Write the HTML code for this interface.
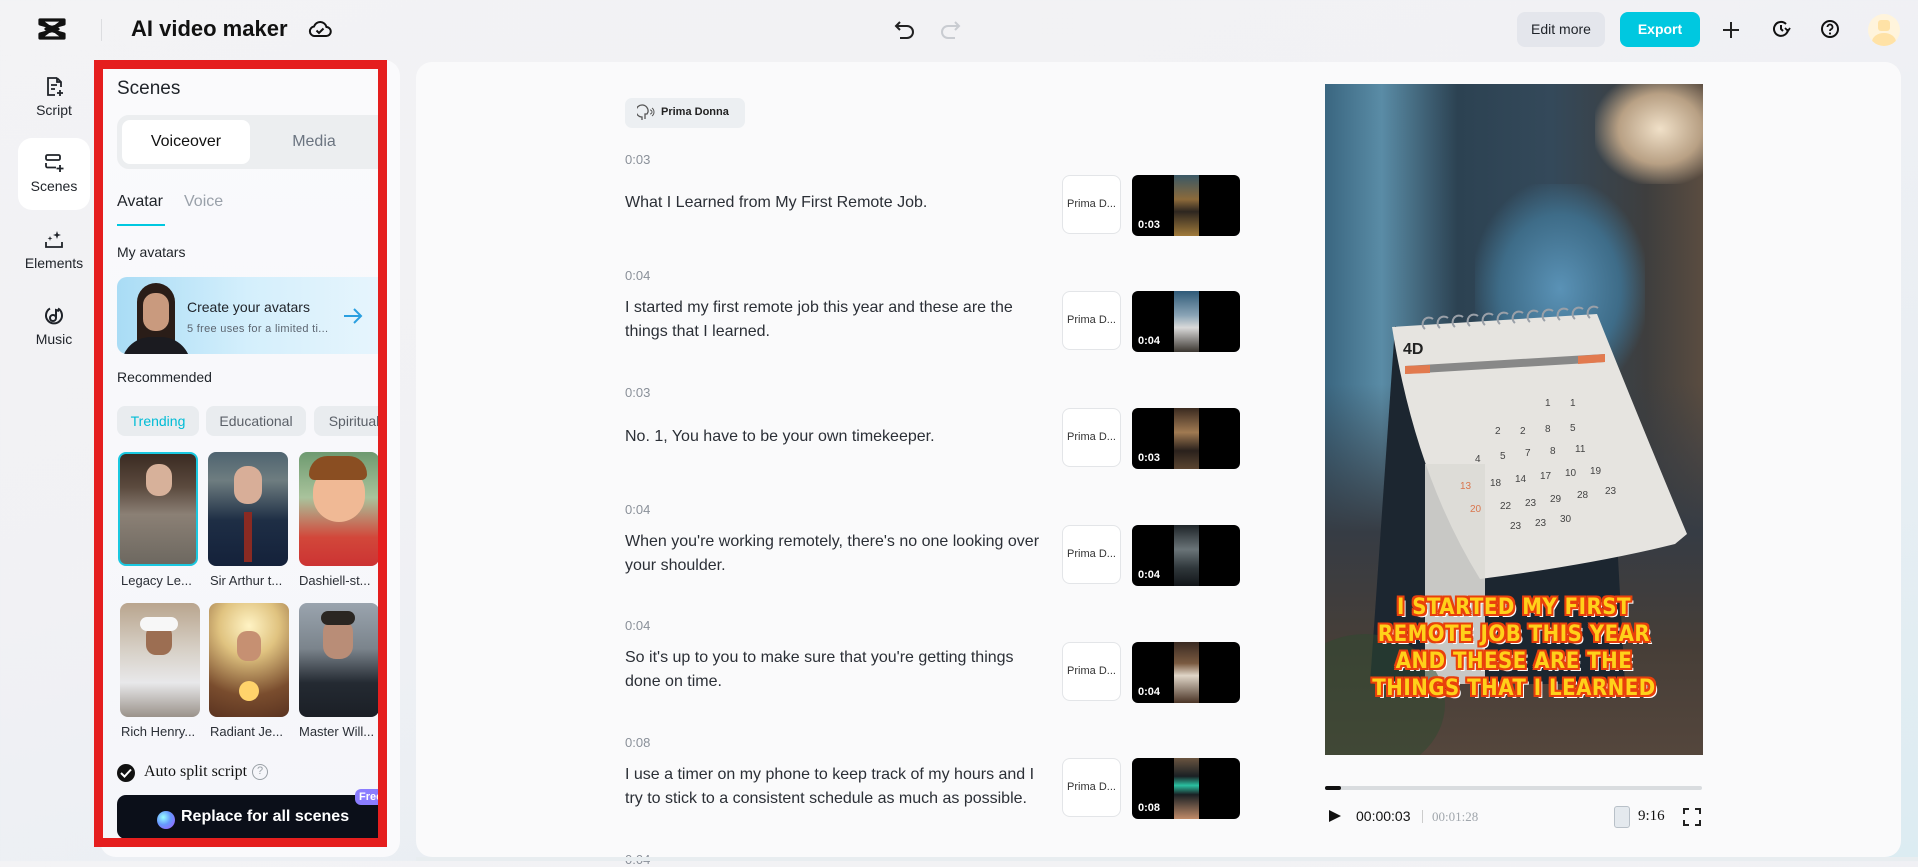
<!DOCTYPE html>
<html><head><meta charset="utf-8"><style>
*{box-sizing:border-box;margin:0;padding:0}
body{width:1918px;height:861px;overflow:hidden;font-family:"Liberation Sans",sans-serif;color:#1f2329;background:linear-gradient(160deg,#f3f3f5 0%,#f1f1f4 40%,#e9eef3 70%,#dcecf2 100%);position:relative}
.abs{position:absolute}
.nav{position:absolute;left:18px;width:72px;text-align:center;font-size:14px;color:#1f2329}
.nav svg{display:block;margin:0 auto 4px}
.chip{position:absolute;top:406px;height:30px;border-radius:8px;background:#e9ecef;font-size:14px;line-height:30px;color:#5b6068;text-align:center}
.av{position:absolute;width:80px;height:114px;border-radius:8px;overflow:hidden}
.avl{position:absolute;font-size:13px;color:#2b2f36;white-space:nowrap}
.ts{position:absolute;left:625px;font-size:13px;color:#8a9099}
.txt{position:absolute;left:625px;width:420px;font-size:16px;line-height:24px;color:#2b2f36}
.pd{position:absolute;left:1062px;width:59px;height:59px;border:1px solid #e3e5e8;border-radius:8px;background:#fff;font-size:11px;line-height:57px;text-align:center;color:#333}
.th{position:absolute;left:1132px;width:108px;height:61px;border-radius:6px;background:#000;overflow:hidden}
.th i{position:absolute;left:42px;top:0;width:25px;height:61px}
.th b{position:absolute;left:6px;bottom:5px;color:#fff;font-size:11px;font-weight:bold}
.sub{position:absolute;left:1325px;width:378px;text-align:center;font-family:"DejaVu Sans Condensed","Liberation Sans",sans-serif;font-weight:bold;font-size:22px;line-height:27px;color:#ffd11a;letter-spacing:0.5px;text-shadow:2px 0 #e8400c,-2px 0 #e8400c,0 2px #e8400c,0 -2px #e8400c,2px 2px #e8400c,-2px -2px #e8400c,2px -2px #e8400c,-2px 2px #e8400c,3px 3px #fff}
</style></head><body>

<!-- top bar -->
<svg class="abs" style="left:38px;top:18px" width="28" height="22" viewBox="0 0 28 22"><path d="M2 2h24v4L8 11l18 5v4H2v-4l18-5L2 6z M2 2l24 18 M26 2L2 20" fill="none" stroke="#111" stroke-width="3.2" stroke-linejoin="round"/></svg>
<div class="abs" style="left:101px;top:19px;width:1px;height:22px;background:#dcdde0"></div>
<div class="abs" style="left:131px;top:16px;font-size:22px;font-weight:bold;color:#111">AI video maker</div>
<svg class="abs" style="left:308px;top:18px" width="24" height="22" viewBox="0 0 24 22"><path d="M6 18h12a4.5 4.5 0 0 0 .5-9A6.5 6.5 0 0 0 6 8.5 4.8 4.8 0 0 0 6 18z" fill="none" stroke="#111" stroke-width="2"/><path d="M8.5 12.5l2.5 2.5 4.5-4.5" fill="none" stroke="#111" stroke-width="2"/></svg>
<svg class="abs" style="left:894px;top:18px" width="22" height="22" viewBox="0 0 22 22"><path d="M6 4L2 8l4 4M2 8h11a6 6 0 0 1 0 12H6" fill="none" stroke="#222" stroke-width="2"/></svg>
<svg class="abs" style="left:939px;top:18px" width="22" height="22" viewBox="0 0 22 22"><path d="M16 4l4 4-4 4M20 8H9a6 6 0 0 0 0 12h7" fill="none" stroke="#c9ccd1" stroke-width="2"/></svg>
<div class="abs" style="left:1517px;top:12px;width:88px;height:35px;border-radius:8px;background:#e4e6ec;font-size:14px;line-height:35px;text-align:center;color:#1f2329">Edit more</div>
<div class="abs" style="left:1620px;top:12px;width:80px;height:35px;border-radius:8px;background:#00c8e0;font-size:14px;line-height:35px;text-align:center;color:#fff;font-weight:bold">Export</div>
<svg class="abs" style="left:1722px;top:21px" width="18" height="18"><path d="M9 1v16M1 9h16" stroke="#222" stroke-width="2"/></svg>
<svg class="abs" style="left:1771px;top:19px" width="20" height="20" viewBox="0 0 20 20"><path d="M17 10a7 7 0 1 1-2-5" fill="none" stroke="#111" stroke-width="2"/><path d="M10 6v4l2 2" fill="none" stroke="#111" stroke-width="2"/><path d="M14 9l3 3 2-3" fill="none" stroke="#111" stroke-width="1.8"/></svg>
<svg class="abs" style="left:1820px;top:19px" width="20" height="20" viewBox="0 0 20 20"><circle cx="10" cy="10" r="8" fill="none" stroke="#111" stroke-width="2"/><path d="M7.5 8a2.5 2.5 0 1 1 3.5 2.3c-.8.4-1 .9-1 1.7" fill="none" stroke="#111" stroke-width="1.8"/><circle cx="10" cy="14.5" r="1.1" fill="#111"/></svg>
<div class="abs" style="left:1868px;top:14px;width:32px;height:32px;border-radius:50%;background:#fff4dc;overflow:hidden"><div class="abs" style="left:10px;top:6px;width:12px;height:11px;background:#ffe2a6;border-radius:3px"></div><div class="abs" style="left:4px;top:19px;width:24px;height:18px;background:#ffe2a6;border-radius:50%"></div></div>

<!-- left nav -->
<div class="nav" style="top:76px"><svg width="22" height="22" viewBox="0 0 22 22"><path d="M14 2H5v17h7M14 2l4 4v5M14 2v4h4M8 9h6M8 13h4" fill="none" stroke="#1f2329" stroke-width="1.8"/><path d="M17 14v6M14 17h6" stroke="#1f2329" stroke-width="1.8"/></svg>Script</div>
<div class="abs" style="left:18px;top:138px;width:72px;height:72px;background:#fff;border-radius:14px"></div>
<div class="nav" style="top:152px"><svg width="22" height="22" viewBox="0 0 22 22"><rect x="3" y="3" width="14" height="5" rx="1.5" fill="none" stroke="#1f2329" stroke-width="1.8"/><path d="M3 11v3a1.5 1.5 0 0 0 1.5 1.5H13M3 14v-3" fill="none" stroke="#1f2329" stroke-width="1.8"/><path d="M17 13v7M13.5 16.5h7" stroke="#1f2329" stroke-width="1.8"/></svg>Scenes</div>
<div class="nav" style="top:229px"><svg width="22" height="22" viewBox="0 0 22 22"><path d="M3 13v5h16v-5" fill="none" stroke="#1f2329" stroke-width="1.8"/><path d="M14 2l1 3 3 1-3 1-1 3-1-3-3-1 3-1zM7 7l.6 1.8L9.4 9.4 7.6 10 7 12l-.6-2L4.6 9.4 6.4 8.8z" fill="#1f2329"/></svg>Elements</div>
<div class="nav" style="top:305px"><svg width="22" height="22" viewBox="0 0 22 22"><path d="M15 3.5A8 8 0 1 1 7 3.5" fill="none" stroke="#1f2329" stroke-width="2"/><circle cx="10" cy="13" r="3" fill="none" stroke="#1f2329" stroke-width="2"/><path d="M13 13V5l3 1" fill="none" stroke="#1f2329" stroke-width="2"/></svg>Music</div>

<!-- left panel -->
<div class="abs" style="left:100px;top:60px;width:300px;height:797px;background:#fafafc;border-radius:16px"></div>
<div class="abs" style="left:94px;top:60px;width:293px;height:787px;border:9px solid #e51e1e"></div>
<div class="abs" style="left:103px;top:69px;width:275px;height:769px;overflow:hidden;background:linear-gradient(180deg,#fafafc,#f5f6fa)">
  <div class="abs" style="left:14px;top:9px;font-size:19px;font-weight:500;color:#1f2329">Scenes</div>
  <div class="abs" style="left:14px;top:46px;width:280px;height:54px;border-radius:12px;background:#eceef0"></div>
  <div class="abs" style="left:19px;top:51px;width:128px;height:44px;border-radius:8px;background:#fff;font-size:16px;line-height:44px;text-align:center;color:#111">Voiceover</div>
  <div class="abs" style="left:147px;top:51px;width:128px;height:44px;font-size:16px;line-height:44px;text-align:center;color:#6b7480">Media</div>
  <div class="abs" style="left:14px;top:124px;font-size:16px;color:#1f2329">Avatar</div>
  <div class="abs" style="left:81px;top:124px;font-size:16px;color:#9aa1aa">Voice</div>
  <div class="abs" style="left:14px;top:155px;width:48px;height:2px;background:#00c8e0"></div>
  <div class="abs" style="left:14px;top:175px;font-size:14px;color:#1f2329">My avatars</div>
  <div class="abs" style="left:14px;top:208px;width:290px;height:77px;border-radius:10px;background:linear-gradient(90deg,#a9dcf5,#d4effc 45%,#eaf6fd);overflow:hidden">
    <div class="abs" style="left:20px;top:6px;width:38px;height:71px;border-radius:19px 19px 0 0;background:#2a1d18"></div>
    <div class="abs" style="left:26px;top:16px;width:26px;height:38px;border-radius:12px;background:#c99a7e"></div>
    <div class="abs" style="left:4px;top:60px;width:70px;height:30px;border-radius:30px 30px 0 0;background:#1b1b20"></div>
    <div class="abs" style="left:70px;top:22px;font-size:14px;font-weight:500;color:#1f2329">Create your avatars</div>
    <div class="abs" style="left:70px;top:46px;font-size:11px;color:#5c6570;letter-spacing:.3px">5 free uses for a limited ti...</div>
    <svg class="abs" style="left:226px;top:30px" width="20" height="18"><path d="M1 9h17M11 2l7 7-7 7" fill="none" stroke="#2a9fe0" stroke-width="2"/></svg>
  </div>
  <div class="abs" style="left:14px;top:300px;font-size:14px;color:#1f2329">Recommended</div>
</div>
<div class="abs" style="left:103px;top:69px;width:275px;height:769px;overflow:hidden">
  <div class="chip" style="left:14px;top:337px;width:82px;color:#00bcd6;font-weight:500">Trending</div>
  <div class="chip" style="left:103px;top:337px;width:100px">Educational</div>
  <div class="chip" style="left:211px;top:337px;width:80px">Spiritual</div>
  <div class="av" style="left:15px;top:383px;border:2px solid #1ac8e0;background:linear-gradient(180deg,#3a2b22 0,#5b4a3e 30%,#8b8075 55%,#6d6860 100%)"><div class="abs" style="left:26px;top:10px;width:26px;height:32px;border-radius:12px;background:#d7b19a"></div></div>
  <div class="av" style="left:105px;top:383px;background:linear-gradient(180deg,#4f6470 0,#6e7d80 25%,#1e2e45 60%,#14213a 100%)"><div class="abs" style="left:26px;top:14px;width:28px;height:38px;border-radius:13px;background:#d8ae98"></div><div class="abs" style="left:36px;top:60px;width:8px;height:50px;background:#8a2a22"></div></div>
  <div class="av" style="left:196px;top:383px;background:linear-gradient(180deg,#6e9a70 0,#a9c39c 40%,#d2473a 75%,#c33 100%)"><div class="abs" style="left:14px;top:14px;width:52px;height:56px;border-radius:26px;background:#f0b995"></div><div class="abs" style="left:10px;top:4px;width:58px;height:24px;border-radius:26px 26px 8px 8px;background:#8a4e22"></div></div>
  <div class="avl" style="left:18px;top:504px">Legacy Le...</div>
  <div class="avl" style="left:107px;top:504px">Sir Arthur t...</div>
  <div class="avl" style="left:196px;top:504px">Dashiell-st...</div>
  <div class="av" style="left:17px;top:534px;background:linear-gradient(180deg,#b9a58e 0,#d6cfc5 40%,#e8e8ea 70%,#9a928a 100%)"><div class="abs" style="left:26px;top:22px;width:26px;height:30px;border-radius:10px;background:#9c6e52"></div><div class="abs" style="left:20px;top:14px;width:38px;height:14px;border-radius:10px;background:#f7f7f7"></div></div>
  <div class="av" style="left:106px;top:534px;background:radial-gradient(circle at 50% 20%,#fff3c4 0,#e0c380 30%,#7a4d2e 70%,#5a3320 100%)"><div class="abs" style="left:28px;top:28px;width:24px;height:30px;border-radius:10px;background:#c69072"></div><div class="abs" style="left:30px;top:78px;width:20px;height:20px;border-radius:50%;background:#ffd36b"></div></div>
  <div class="av" style="left:196px;top:534px;background:linear-gradient(180deg,#9aa4ae 0,#7b848c 40%,#242a32 70%,#1b1f26 100%)"><div class="abs" style="left:24px;top:16px;width:30px;height:40px;border-radius:13px;background:#b98d77"></div><div class="abs" style="left:22px;top:8px;width:34px;height:14px;border-radius:12px;background:#2a2622"></div></div>
  <div class="avl" style="left:18px;top:655px">Rich Henry...</div>
  <div class="avl" style="left:107px;top:655px">Radiant Je...</div>
  <div class="avl" style="left:196px;top:655px">Master Will...</div>
  <div class="abs" style="left:14px;top:695px;width:18px;height:18px;border-radius:50%;background:#111"></div>
  <svg class="abs" style="left:17px;top:699px" width="12" height="10"><path d="M1 5l3.5 3.5L11 1.5" fill="none" stroke="#fff" stroke-width="2"/></svg>
  <div class="abs" style="left:41px;top:694px;font-family:'Liberation Serif',serif;font-size:16px;color:#111">Auto split script</div>
  <div class="abs" style="left:149px;top:695px;width:16px;height:16px;border:1.5px solid #9aa0a6;border-radius:50%;font-size:11px;line-height:13px;text-align:center;color:#9aa0a6">?</div>
  <div class="abs" style="left:14px;top:726px;width:280px;height:44px;border-radius:9px;background:#0b0f19"></div>
  <div class="abs" style="left:54px;top:742px;width:18px;height:18px;border-radius:50%;background:radial-gradient(circle at 35% 35%,#9ff 0,#69f 45%,#a5f 100%)"></div>
  <div class="abs" style="left:78px;top:739px;font-size:16px;font-weight:bold;color:#fff">Replace for all scenes</div>
  <div class="abs" style="left:252px;top:720px;width:40px;height:16px;border-radius:6px 6px 0 6px;background:#8b7dff;color:#fff;font-size:11px;font-weight:bold;line-height:16px;padding-left:4px">Free</div>
</div>

<!-- main panel -->
<div class="abs" style="left:416px;top:62px;width:1485px;height:795px;background:#fafafb;border-radius:16px;overflow:hidden">
</div>
<div class="abs" style="left:625px;top:98px;width:120px;height:30px;border-radius:7px;background:#eceff2"></div>
<svg class="abs" style="left:637px;top:104px" width="20" height="18" viewBox="0 0 20 18"><path d="M5 16v-3a6 6 0 1 1 6-5l-1 2h-2v5" fill="none" stroke="#555" stroke-width="1.3"/><path d="M13 6a2 2 0 0 1 0 4M15 4a5 5 0 0 1 0 8" fill="none" stroke="#555" stroke-width="1"/></svg>
<div class="abs" style="left:661px;top:106px;font-size:11px;font-weight:bold;color:#222">Prima Donna</div>

<div class="ts" style="top:152px">0:03</div>
<div class="txt" style="top:191px">What I Learned from My First Remote Job.</div>
<div class="pd" style="top:175px">Prima D...</div>
<div class="th" style="top:175px"><i style="background:linear-gradient(180deg,#3a5866,#8c6a3a 40%,#2d2620 60%,#a07a3a)"></i><b>0:03</b></div>

<div class="ts" style="top:268px">0:04</div>
<div class="txt" style="top:296px">I started my first remote job this year and these are the things that I learned.</div>
<div class="pd" style="top:291px">Prima D...</div>
<div class="th" style="top:291px"><i style="background:linear-gradient(180deg,#2f5a78,#8aa4b6 40%,#d9d9d9 60%,#3b3630)"></i><b>0:04</b></div>

<div class="ts" style="top:385px">0:03</div>
<div class="txt" style="top:425px">No. 1, You have to be your own timekeeper.</div>
<div class="pd" style="top:408px">Prima D...</div>
<div class="th" style="top:408px"><i style="background:linear-gradient(180deg,#3a2a20,#a07a52 40%,#2a211c 70%,#5a4430)"></i><b>0:03</b></div>

<div class="ts" style="top:502px">0:04</div>
<div class="txt" style="top:530px">When you're working remotely, there's no one looking over your shoulder.</div>
<div class="pd" style="top:525px">Prima D...</div>
<div class="th" style="top:525px"><i style="background:linear-gradient(180deg,#1e2428,#6a7478 40%,#30383c 70%,#121518)"></i><b>0:04</b></div>

<div class="ts" style="top:618px">0:04</div>
<div class="txt" style="top:646px">So it's up to you to make sure that you're getting things done on time.</div>
<div class="pd" style="top:642px">Prima D...</div>
<div class="th" style="top:642px"><i style="background:linear-gradient(180deg,#3a2a22,#7a5a40 35%,#e0d6c8 55%,#4a3426)"></i><b>0:04</b></div>

<div class="ts" style="top:735px">0:08</div>
<div class="txt" style="top:763px">I use a timer on my phone to keep track of my hours and I try to stick to a consistent schedule as much as possible.</div>
<div class="pd" style="top:758px">Prima D...</div>
<div class="th" style="top:758px"><i style="background:linear-gradient(180deg,#6a5440,#1a2024 30%,#2ac0a0 45%,#1a2024 60%,#c08a68)"></i><b>0:08</b></div>
<div class="ts" style="top:852px">0:04</div>
<div class="abs" style="left:416px;top:857px;width:1502px;height:4px;background:#e8edf0"></div>

<!-- preview -->
<div class="abs" style="left:1325px;top:84px;width:378px;height:671px;overflow:hidden;background:linear-gradient(90deg,#3a6680 0%,#5a8ca6 15%,#2c4252 35%,#34495a 60%,#3e3e3e 85%,#5a4c40 100%)">
  <div class="abs" style="left:270px;top:-10px;width:130px;height:110px;background:radial-gradient(ellipse,#f0e0c8 0,#b8a084 45%,transparent 75%)"></div>
  <div class="abs" style="left:150px;top:100px;width:170px;height:210px;background:radial-gradient(ellipse,#5a92b6 0,#3e6c88 50%,transparent 75%)"></div>
  <div class="abs" style="left:0;top:300px;width:378px;height:371px;background:linear-gradient(180deg,transparent 0,#363c44 40%,#463e38 70%,#54463c 100%)"></div>
  <svg class="abs" style="left:0;top:0" width="378" height="671">
    <path d="M70 242 L45 600 L300 600 L290 420 Z" fill="#1c2630"/>
    <path d="M67 243 L272 230 Q320 350 362 450 L350 460 Q270 480 155 495 Q90 390 67 243 Z" fill="#e6e4e0"/>
    <rect x="100" y="380" width="60" height="220" fill="#dcdad6" opacity=".9"/>
    <path d="M80 282 L280 270 L280 278 L80 290 Z" fill="#888"/>
    <path d="M80 282 L105 281 L105 289 L80 290 Z M253 272 L280 270 L280 278 L253 280 Z" fill="#e27a4f"/>
    <text x="78" y="270" font-family="Liberation Sans" font-weight="bold" font-size="16" fill="#222">4D</text>
    <g font-family="Liberation Sans" font-size="10" fill="#444">
      <text x="220" y="322">1</text><text x="245" y="322">1</text>
      <text x="170" y="350">2</text><text x="195" y="350">2</text><text x="220" y="348">8</text><text x="245" y="347">5</text>
      <text x="150" y="378">4</text><text x="175" y="375">5</text><text x="200" y="372">7</text><text x="225" y="370">8</text><text x="250" y="368">11</text>
      <text x="165" y="402">18</text><text x="190" y="398">14</text><text x="215" y="395">17</text><text x="240" y="392">10</text><text x="265" y="390">19</text>
      <text x="175" y="425">22</text><text x="200" y="422">23</text><text x="225" y="418">29</text><text x="252" y="414">28</text><text x="280" y="410">23</text>
      <text x="185" y="445">23</text><text x="210" y="442">23</text><text x="235" y="438">30</text>
    </g>
    <g fill="#d9764e" font-family="Liberation Sans" font-size="10"><text x="135" y="405">13</text><text x="145" y="428">20</text></g>
    <g stroke="#9aa0a8" stroke-width="2" fill="none"><path d="M100 245a5 5 0 0 1 8-10M115 244a5 5 0 0 1 8-10M130 243a5 5 0 0 1 8-10M145 242a5 5 0 0 1 8-10M160 241a5 5 0 0 1 8-10M175 240a5 5 0 0 1 8-10M190 239a5 5 0 0 1 8-10M205 238a5 5 0 0 1 8-10M220 237a5 5 0 0 1 8-10M235 236a5 5 0 0 1 8-10M250 235a5 5 0 0 1 8-10M265 234a5 5 0 0 1 8-10"/></g>
    <ellipse cx="40" cy="620" rx="80" ry="70" fill="#2e4a30" opacity=".5"/>
  </svg>
</div>
<div class="sub" style="top:594px">I STARTED MY FIRST<br>REMOTE JOB THIS YEAR<br>AND THESE ARE THE<br>THINGS THAT I LEARNED</div>

<div class="abs" style="left:1325px;top:786px;width:377px;height:4px;border-radius:2px;background:#d9dcdf"></div>
<div class="abs" style="left:1325px;top:786px;width:16px;height:4px;border-radius:2px;background:#111"></div>
<svg class="abs" style="left:1328px;top:809px" width="14" height="14"><path d="M1 1l12 6-12 6z" fill="#111"/></svg>
<div class="abs" style="left:1356px;top:808px;font-size:14px;color:#111">00:00:03</div>
<div class="abs" style="left:1422px;top:810px;width:1px;height:13px;background:#ccc"></div>
<div class="abs" style="left:1432px;top:809px;font-family:'Liberation Serif',serif;font-size:13px;color:#a0a6ac">00:01:28</div>
<div class="abs" style="left:1614px;top:806px;width:16px;height:22px;border:1.5px solid #b8c0c8;border-radius:3px;background:#e4e9ee"></div>
<div class="abs" style="left:1638px;top:808px;font-family:'Liberation Serif',serif;font-size:15px;color:#111">9:16</div>
<svg class="abs" style="left:1683px;top:808px" width="18" height="18"><path d="M1 6V1h5M12 1h5v5M17 12v5h-5M6 17H1v-5" fill="none" stroke="#222" stroke-width="2"/></svg>
</body></html>
